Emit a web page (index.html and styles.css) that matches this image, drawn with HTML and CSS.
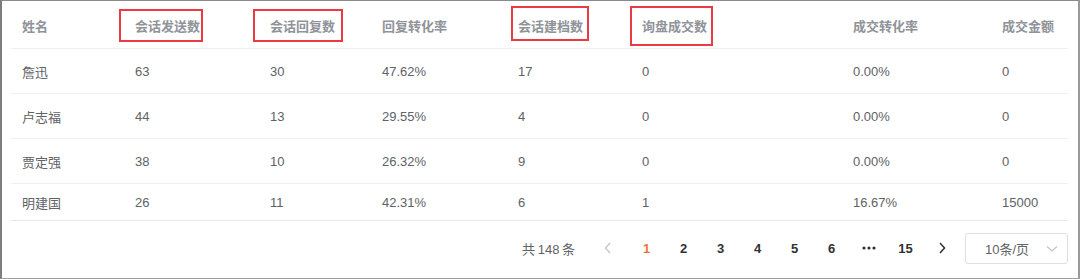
FILE: index.html
```html
<!DOCTYPE html>
<html lang="zh">
<head>
<meta charset="utf-8">
<link rel="stylesheet" href="styles.css">
</head>
<body>
<div class="frame">
  <div class="table">
    <div class="row head">
      <div class="cell">姓名</div>
      <div class="cell">会话发送数</div>
      <div class="cell">会话回复数</div>
      <div class="cell">回复转化率</div>
      <div class="cell">会话建档数</div>
      <div class="cell">询盘成交数</div>
      <div class="cell">成交转化率</div>
      <div class="cell">成交金额</div>
    </div>
    <div class="row">
      <div class="cell">詹迅</div><div class="cell">63</div><div class="cell">30</div><div class="cell">47.62%</div><div class="cell">17</div><div class="cell">0</div><div class="cell">0.00%</div><div class="cell">0</div>
    </div>
    <div class="row">
      <div class="cell">卢志福</div><div class="cell">44</div><div class="cell">13</div><div class="cell">29.55%</div><div class="cell">4</div><div class="cell">0</div><div class="cell">0.00%</div><div class="cell">0</div>
    </div>
    <div class="row">
      <div class="cell">贾定强</div><div class="cell">38</div><div class="cell">10</div><div class="cell">26.32%</div><div class="cell">9</div><div class="cell">0</div><div class="cell">0.00%</div><div class="cell">0</div>
    </div>
    <div class="row last">
      <div class="cell">明建国</div><div class="cell">26</div><div class="cell">11</div><div class="cell">42.31%</div><div class="cell">6</div><div class="cell">1</div><div class="cell">16.67%</div><div class="cell">15000</div>
    </div>
  </div>
  <div class="pager">
    <span class="total">共 148 条</span>
    <span class="nav prev"><svg width="8" height="12" viewBox="0 0 8 12"><path d="M6 1 L1.5 6 L6 11" fill="none" stroke="#c0c4cc" stroke-width="1.3"/></svg></span>
    <span class="pg active">1</span>
    <span class="pg">2</span>
    <span class="pg">3</span>
    <span class="pg">4</span>
    <span class="pg">5</span>
    <span class="pg">6</span>
    <span class="pg dots"><svg width="14" height="4" viewBox="0 0 14 4"><circle cx="2" cy="2" r="1.6" fill="#303133"/><circle cx="7" cy="2" r="1.6" fill="#303133"/><circle cx="12" cy="2" r="1.6" fill="#303133"/></svg></span>
    <span class="pg">15</span>
    <span class="nav next"><svg width="8" height="12" viewBox="0 0 8 12"><path d="M2 1 L6.5 6 L2 11" fill="none" stroke="#303133" stroke-width="1.5"/></svg></span>
    <span class="select">10条/页<svg class="chev" width="12" height="8" viewBox="0 0 12 8"><path d="M1 1.5 L6 6 L11 1.5" fill="none" stroke="#c0c4cc" stroke-width="1.2"/></svg></span>
  </div>
  <div class="mark m1"></div>
  <div class="mark m2"></div>
  <div class="mark m3"></div>
  <div class="mark m4"></div>
</div>
</body>
</html>
```
FILE: styles.css
```css
html, body {
  margin: 0;
  padding: 0;
  background: #fff;
}
body {
  font-family: "Liberation Sans", "Noto Sans CJK SC", sans-serif;
  font-size: 13px;
  color: #606266;
}
.frame {
  position: relative;
  width: 1080px;
  height: 279px;
  box-sizing: border-box;
  border-top: 1px solid #8a8a8a;
  border-left: 2px solid #7d7d7d;
  border-right: 2px solid #9a9a9a;
  border-bottom: 1px solid #a0a0a0;
  padding: 0 10px 0 9px;
}
.table {
  display: flex;
  flex-direction: column;
}
.row {
  display: grid;
  grid-template-columns: 113px 135px 112px 136px 124px 211px 149px 1fr;
  height: 44px;
  align-items: center;
  border-bottom: 1px solid #eef0f5;
}
.row.head {
  height: 47px;
  color: #909399;
  font-weight: bold;
}
.row.last {
  height: 36px;
  border-bottom: 1px solid #e6e9f2;
}
.cell {
  padding: 0 11px;
  white-space: nowrap;
}
.row.head .cell {
  padding-top: 2px;
}
.pager {
  display: flex;
  align-items: center;
  justify-content: flex-end;
  height: 54px;
}
.total {
  color: #606266;
  margin-right: 18px;
  word-spacing: -1px;
}
.nav {
  display: flex;
  align-items: center;
  justify-content: center;
  width: 30px;
  height: 28px;
}
.prev { margin-right: 5px; }
.pg {
  width: 37px;
  text-align: center;
  font-weight: bold;
  color: #303133;
}
.pg.active {
  color: #f5713c;
}
.pg.dots {
  display: flex;
  justify-content: center;
  align-items: center;
}
.next { margin-left: 3px; margin-right: 8px; }
.select {
  position: relative;
  box-sizing: border-box;
  width: 103px;
  height: 31px;
  border: 1px solid #dcdfe6;
  border-radius: 3px;
  padding-left: 19px;
  display: flex;
  align-items: center;
  color: #606266;
}
.chev {
  position: absolute;
  right: 9px;
  top: 11px;
}
.mark {
  position: absolute;
  border: 2px solid #ec3a42;
  box-sizing: border-box;
}
.m1 { left: 117px; top: 8px; width: 84px; height: 33px; }
.m2 { left: 251px; top: 8px; width: 90px; height: 33px; }
.m3 { left: 509px; top: 5px; width: 78px; height: 35px; }
.m4 { left: 628px; top: 5px; width: 83px; height: 40px; }
```
